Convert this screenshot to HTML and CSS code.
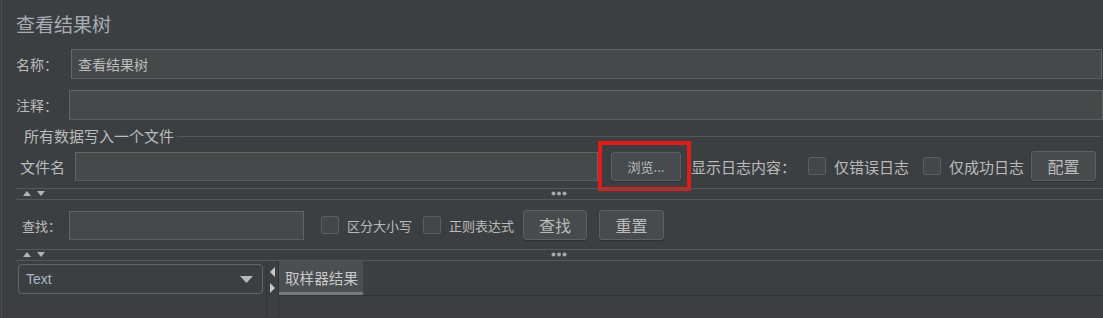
FILE: index.html
```html
<!DOCTYPE html>
<html>
  <head>
    <meta charset="utf-8">
    <title>查看结果树</title>
    <link rel="stylesheet" href="styles.css">
  </head>
  <body>
    <div class="panel">
      <div class="panel_title">查看结果树</div>

      <div class="form_row row-name">
        <span class="form_label">名称：</span>
        <input type="text" class="input-dark" value="查看结果树">
      </div>
      <div class="form_row row-comment">
        <span class="form_label">注释：</span>
        <input type="text" class="input-dark">
      </div>

      <div class="group">
        <div class="group_legend"><span>所有数据写入一个文件</span></div>
        <div class="file_row">
          <span class="file_label">文件名</span>
          <input type="text" class="input-dark input-file">
          <div class="mark">
            <button class="btn-dark btn-browse">浏览...</button>
          </div>
          <span class="log_label">显示日志内容：</span>
          <label class="check"><span class="check_box"></span>仅错误日志</label>
          <label class="check"><span class="check_box"></span>仅成功日志</label>
          <button class="btn-dark btn-config">配置</button>
        </div>
      </div>

      <div class="splitter">
        <svg class="split_arrows" width="24" height="7" viewBox="0 0 24 7">
          <path d="M0 6 L4 1 L8 6 Z" fill="#b4b4b4"/>
          <path d="M14 1 L22 1 L18 6 Z" fill="#b4b4b4"/>
        </svg>
        <svg class="split_dots" width="16" height="5" viewBox="0 0 16 5">
          <circle cx="2.5" cy="2.5" r="2" fill="#a8a8a8"/>
          <circle cx="8" cy="2.5" r="2" fill="#a8a8a8"/>
          <circle cx="13.5" cy="2.5" r="2" fill="#a8a8a8"/>
        </svg>
      </div>

      <div class="search_row">
        <span class="search_label">查找：</span>
        <input type="text" class="input-dark input-search">
        <label class="check check-small"><span class="check_box"></span>区分大小写</label>
        <label class="check check-small"><span class="check_box"></span>正则表达式</label>
        <button class="btn-dark btn-find">查找</button>
        <button class="btn-dark btn-reset">重置</button>
      </div>

      <div class="splitter">
        <svg class="split_arrows" width="24" height="7" viewBox="0 0 24 7">
          <path d="M0 6 L4 1 L8 6 Z" fill="#b4b4b4"/>
          <path d="M14 1 L22 1 L18 6 Z" fill="#b4b4b4"/>
        </svg>
        <svg class="split_dots" width="16" height="5" viewBox="0 0 16 5">
          <circle cx="2.5" cy="2.5" r="2" fill="#a8a8a8"/>
          <circle cx="8" cy="2.5" r="2" fill="#a8a8a8"/>
          <circle cx="13.5" cy="2.5" r="2" fill="#a8a8a8"/>
        </svg>
      </div>

      <div class="result_area">
        <div class="result_left">
          <div class="combo">
            <span>Text</span>
            <svg width="13" height="7" viewBox="0 0 13 7"><path d="M0 0 L13 0 L6.5 7 Z" fill="#b8b8b8"/></svg>
          </div>
        </div>
        <div class="vsplit">
          <svg width="6" height="10" viewBox="0 0 6 10"><path d="M5 0 L5 10 L0 5 Z" fill="#c8c8c8"/></svg>
          <svg width="6" height="10" viewBox="0 0 6 10"><path d="M0 0 L0 10 L5 5 Z" fill="#c8c8c8"/></svg>
        </div>
        <div class="result_right">
          <div class="tabs">
            <div class="tab-active">取样器结果</div>
          </div>
        </div>
      </div>
    </div>
  </body>
</html>
```

FILE: styles.css
```css
html, body{
  margin: 0;
  padding: 0;
  width: 100%;
  height: 100%;
  background-color: #3c3f41;
  overflow: hidden;
}
body{
  font-family: "Noto Sans CJK SC", "Liberation Sans", sans-serif;
  font-size: 14px;
  color: #bbbbbb;
}
.panel{
  box-sizing: border-box;
  height: 318px;
  border-left: 1px solid #4a4d4f;
  margin-left: 1px;
  display: flex;
  flex-direction: column;
}
.panel_title{
  height: 20px;
  margin-top: 14px;
  padding-left: 14px;
  font-size: 19px;
  line-height: 20px;
  color: #a7adb3;
}
.form_row{
  display: flex;
  align-items: center;
  height: 30px;
  padding-left: 14px;
}
.row-name{
  margin-top: 15px;
  padding-right: 1px;
}
.row-comment{
  margin-top: 11px;
}
.form_label{
  width: 55px;
  flex-shrink: 0;
}
.row-comment .form_label{
  width: 53px;
}
input.input-dark{
  box-sizing: border-box;
  height: 30px;
  flex: 1;
  min-width: 0;
  background: #45494a;
  border: 1px solid #646464;
  border-bottom-color: #5a5d5f;
  color: #bbbbbb;
  font-family: inherit;
  font-size: 14px;
  padding: 0 6px;
  outline: none;
}
.group{
  margin-top: 9px;
  padding-left: 16px;
  padding-right: 2px;
  font-size: 15px;
}
.group_legend{
  height: 14px;
  display: flex;
  align-items: center;
}
.group_legend::before{
  content: '';
  flex: 1;
  height: 1px;
  background: #555859;
  order: 2;
}
.group_legend span{
  padding: 0 3px 0 6px;
  line-height: 14px;
}
.file_row{
  display: flex;
  align-items: center;
  height: 30px;
  margin-top: 8px;
  padding-left: 2px;
}
.file_label{
  width: 55px;
  flex-shrink: 0;
}
.input-file{
  flex: 0 0 523px !important;
  height: 29px !important;
}
.mark{
  position: relative;
  margin-left: 13px;
  display: flex;
}
.mark::after{
  content: '';
  position: absolute;
  left: -13px;
  top: -11px;
  width: 85px;
  height: 42px;
  border: 4px solid #e21b1b;
}
.btn-dark{
  box-sizing: border-box;
  height: 30px;
  background: #474b4d;
  border: 1px solid #5e6163;
  border-radius: 3px;
  box-shadow: 0 1px 1px rgba(0,0,0,.25);
  color: #bbbbbb;
  font-family: inherit;
  font-size: 14px;
  padding: 0;
}
.btn-browse{
  width: 70px;
  height: 29px;
  font-size: 13px;
}
.log_label{
  margin-left: 10px;
}
.check{
  display: flex;
  align-items: center;
  margin-left: 12px;
}
.check_box{
  box-sizing: border-box;
  width: 18px;
  height: 18px;
  border: 1px solid #5b5e60;
  border-radius: 2px;
  background: #43474a;
  margin-right: 8px;
}
.check + .check{
  margin-left: 14px;
}
.btn-config{
  width: 65px;
  margin-left: 7px;
  font-size: 16px;
}
.splitter{
  position: relative;
  margin-top: 7px;
  margin-left: 14px;
  height: 10px;
  border-top: 1px solid #555859;
  border-bottom: 1px solid #555859;
}
.split_arrows{
  position: absolute;
  left: 7px;
  top: 1px;
}
.split_dots{
  position: absolute;
  left: 535px;
  top: 2px;
}
.search_row{
  display: flex;
  align-items: center;
  height: 30px;
  margin-top: 10px;
  padding-left: 20px;
  font-size: 13px;
}
.search_label{
  width: 47px;
  flex-shrink: 0;
}
.input-search{
  flex: 0 0 235px !important;
  height: 29px !important;
}
.check-small{
  margin-left: 17px;
}
.check-small + .check-small{
  margin-left: 11px;
}
.btn-find{
  width: 64px;
  margin-left: 9px;
  font-size: 16px;
}
.btn-reset{
  width: 65px;
  margin-left: 12px;
  font-size: 16px;
}
.search_row + .splitter{
  margin-top: 9px;
}
.result_area{
  flex: 1;
  display: flex;
  margin-left: 14px;
}
.result_left{
  width: 248px;
  padding: 3px 0 0 2px;
}
.combo{
  box-sizing: border-box;
  width: 245px;
  height: 30px;
  border: 1px solid #646464;
  border-radius: 4px;
  display: flex;
  align-items: center;
  justify-content: space-between;
  padding: 0 9px 0 7px;
  font-family: "Liberation Sans", sans-serif;
  color: #a9b7c6;
}
.vsplit{
  box-sizing: border-box;
  width: 13px;
  border-left: 1px solid #323436;
  border-right: 1px solid #323436;
  display: flex;
  flex-direction: column;
  align-items: center;
  gap: 6px;
  padding-top: 6px;
}
.result_right{
  flex: 1;
}
.tabs{
  display: flex;
  height: 34px;
  border-bottom: 1px solid #313335;
}
.tab-active{
  box-sizing: border-box;
  height: 34px;
  padding: 6px 5px 0 6px;
  background: #4b4f52;
  border-bottom: 3px solid #747a80;
  color: #c8c8c8;
  font-size: 14.6px;
}
```
